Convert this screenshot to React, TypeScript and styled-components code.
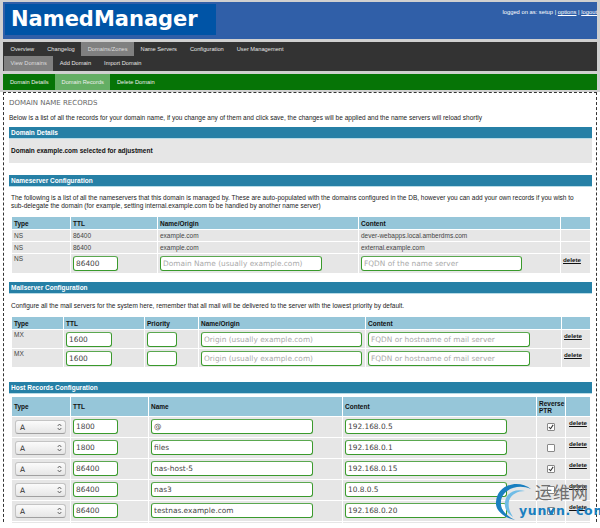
import styled, { createGlobalStyle } from 'styled-components';

const GlobalStyle = createGlobalStyle`
  html, body {
    margin: 0;
    padding: 0;
    height: 528px;
    overflow: hidden;
    background: #fff;
    font-family: "Liberation Sans", Arial, sans-serif;
    font-size: 6.5px;
    color: #222;
  }
`;

const Page = styled.div`
  width: 600px;
  height: 523px;
  overflow: hidden;
  position: relative;
  background: linear-gradient(#d0d0d0 0, #d0d0d0 92px, #fff 92px);
  padding: 2px 3px 0;
  box-sizing: border-box;
`;

const Header = styled.div`
  display: flex;
  justify-content: space-between;
  height: 37px;
  background: #305fa8;
  padding: 2px 0 0 2px;
  box-sizing: border-box;
`;

const Logo = styled.div`
  width: 211px;
  height: 31px;
  background: #0054a6;
  color: #fff;
  font: bold 21px/31px "DejaVu Sans", sans-serif;
  padding-left: 6px;
  box-sizing: border-box;
`;

const Session = styled.div`
  color: #fff;
  font-size: 5.8px;
  padding-top: 5px;

  a {
    color: #fff;
    text-decoration: underline;
  }
`;

const Nav = styled.div`
  margin-top: 3px;
  height: 29px;
  background: #333;
`;

const NavRow = styled.div`
  display: flex;
  height: 14px;
  padding-left: 1px;

  & + & {
    height: 15px;
  }
`;

const NavTab = styled.div<{ $active?: boolean }>`
  padding: 0 6.5px;
  line-height: 14.5px;
  font-size: 5.7px;
  color: ${(p) => (p.$active ? '#ddd' : '#e4e4e4')};
  background: ${(p) => (p.$active ? '#808080' : 'transparent')};
  white-space: nowrap;
`;

const SubNav = styled.div`
  display: flex;
  margin-top: 3px;
  height: 16px;
  padding-left: 0.5px;
  background: #067406;
`;

const SubTab = styled.div<{ $active?: boolean }>`
  padding: 0 6.5px;
  line-height: 16px;
  font-size: 5.7px;
  color: #eee;
  background: ${(p) => (p.$active ? '#64ae64' : 'transparent')};
  white-space: nowrap;
`;

const Content = styled.div`
  margin-top: 2px;
  height: 440px;
  border: 1px dashed #333;
  border-bottom: none;
  background: #fff;
  padding: 5px 4px 0 5px;
  box-sizing: border-box;
`;

const Title = styled.h3`
  margin: 0;
  font: normal 7px/10px "DejaVu Sans", sans-serif;
  color: #666;
  text-transform: uppercase;
`;

const Intro = styled.p`
  margin: 5px 0 0;
  line-height: 9px;
  color: #222;
`;

const SectionBar = styled.div<{ $top: number }>`
  margin-top: ${(p) => p.$top}px;
  height: 11px;
  background: #2680a6;
  border-bottom: 1px solid #b8dbe6;
  color: #fff;
  font-weight: bold;
  line-height: 11px;
  padding-left: 2px;
`;

const DetailBox = styled.div`
  height: 24px;
  background: #e6e6e6;
  color: #111;
  font-weight: bold;
  line-height: 24px;
  padding-left: 2px;
`;

const Note = styled.p<{ $height: number; $top: number }>`
  margin: 0;
  height: ${(p) => p.$height}px;
  padding: ${(p) => p.$top}px 15px 0 2px;
  box-sizing: border-box;
  line-height: 8px;
  color: #222;
`;

const Table = styled.table<{ $top?: number }>`
  border-collapse: separate;
  border-spacing: 1px;
  table-layout: fixed;
  width: 580px;
  margin: ${(p) => p.$top ?? 0}px 0 0 2px;
`;

const Col = styled.col<{ $w: number }>`
  width: ${(p) => p.$w}px;
`;

const Th = styled.th<{ $height: number }>`
  height: ${(p) => p.$height}px;
  background: #96c6d9;
  color: #111;
  text-align: left;
  font-weight: bold;
  padding: 0 1px 0 2px;
  line-height: 7px;
`;

const Td = styled.td<{ $height: number; $inset?: number }>`
  height: ${(p) => p.$height}px;
  background: #e6e6e6;
  color: #444;
  padding: 1px 2px 1px ${(p) => p.$inset ?? 2}px;
  vertical-align: ${(p) => (p.$height > 14 ? 'top' : 'middle')};
  box-sizing: border-box;
  line-height: 8px;
  overflow: hidden;
`;

const CheckCell = styled(Td)`
  text-align: center;
  vertical-align: middle;
`;

const Field = styled.input<{ $w: number }>`
  display: block;
  width: ${(p) => p.$w}px;
  height: 15px;
  box-sizing: border-box;
  margin-top: 1px;
  padding: 0 2px;
  border: 1px solid #3a9a2c;
  border-top-color: #5aa84f;
  border-radius: 3px;
  outline: none;
  background: #fff;
  color: #444;
  font: 7.4px "DejaVu Sans", sans-serif;

  &::placeholder {
    color: #aaa;
    opacity: 1;
  }
`;

const SelectBox = styled.div`
  display: flex;
  align-items: center;
  justify-content: space-between;
  width: 51px;
  height: 14px;
  margin: 2px 0 0 1px;
  padding: 0 3px 0 4px;
  box-sizing: border-box;
  border: 1px solid #c4c4c4;
  border-bottom-color: #a0a0a0;
  border-radius: 3px;
  background: linear-gradient(#fbfbfb, #e6e6e6);
  color: #333;
  font: 7.4px "DejaVu Sans", sans-serif;
`;

const Check = styled.span`
  display: inline-flex;
  width: 8px;
  height: 8px;
  box-sizing: border-box;
  border: 1px solid #888;
  border-radius: 1px;
  background: #fff;
  vertical-align: middle;
`;

const Delete = styled.a`
  color: #111;
  font-size: 6.2px;
  font-weight: bold;
  text-decoration: underline;
  line-height: 9px;
`;

const Watermark = styled.div`
  position: absolute;
  left: 490px;
  top: 480px;
  width: 110px;
  height: 43px;
`;

const WatermarkCn = styled.div`
  position: absolute;
  left: 45px;
  top: 2px;
  color: #6f6f6f;
  font: 17px/20px "Noto Sans CJK SC", sans-serif;
  letter-spacing: 1px;
  white-space: nowrap;
`;

const WatermarkEn = styled.div`
  position: absolute;
  left: 29px;
  top: 24px;
  color: #1a7fc0;
  font: bold 12.5px/14px "DejaVu Sans", sans-serif;
  letter-spacing: 0.7px;
  white-space: nowrap;
`;

const Swirl = styled.svg`
  position: absolute;
  left: 5px;
  top: 2px;
`;

const nameservers = [
  ['NS', '86400', 'example.com', 'dever-webapps.local.amberdms.com'],
  ['NS', '86400', 'example.com', 'external.example.com'],
];

const hosts = [
  ['1800', '@', '192.168.0.5', true],
  ['1800', 'files', '192.168.0.1', false],
  ['86400', 'nas-host-5', '192.168.0.15', true],
  ['86400', 'nas3', '10.8.0.5', false],
  ['86400', 'testnas.example.com', '192.168.0.20', true],
] as const;

const Tick = () => (
  <svg width="6" height="6" viewBox="0 0 7 7">
    <path d="M1 3.5 L3 5.5 L6 1" fill="none" stroke="#333" strokeWidth="1.2" />
  </svg>
);

const Arrows = () => (
  <svg width="5" height="8" viewBox="0 0 5 8">
    <path d="M.7 3 2.5 1 4.3 3M.7 5 2.5 7 4.3 5" fill="none" stroke="#444" strokeWidth=".8" />
  </svg>
);

const App = () => (
  <>
    <GlobalStyle />
    <Page>
      <Header>
        <Logo>NamedManager</Logo>
        <Session>
          logged on as: setup | <a>options</a> | <a>logout</a>
        </Session>
      </Header>
      <Nav>
        <NavRow>
          <NavTab>Overview</NavTab>
          <NavTab>Changelog</NavTab>
          <NavTab $active>Domains/Zones</NavTab>
          <NavTab>Name Servers</NavTab>
          <NavTab>Configuration</NavTab>
          <NavTab>User Management</NavTab>
        </NavRow>
        <NavRow>
          <NavTab $active>View Domains</NavTab>
          <NavTab>Add Domain</NavTab>
          <NavTab>Import Domain</NavTab>
        </NavRow>
      </Nav>
      <SubNav>
        <SubTab>Domain Details</SubTab>
        <SubTab $active>Domain Records</SubTab>
        <SubTab>Delete Domain</SubTab>
      </SubNav>
      <Content>
        <Title>Domain Name Records</Title>
        <Intro>
          Below is a list of all the records for your domain name, if you change any of them and
          click save, the changes will be applied and the name servers will reload shortly
        </Intro>
        <SectionBar $top={5}>Domain Details</SectionBar>
        <DetailBox>Domain example.com selected for adjustment</DetailBox>
        <SectionBar $top={12}>Nameserver Configuration</SectionBar>
        <Note $height={29} $top={7}>
          The following is a list of all the nameservers that this domain is managed by. These are
          auto-populated with the domains configured in the DB, however you can add your own records
          if you wish to sub-delegate the domain (for example, setting internal.example.com to be
          handled by another name server)
        </Note>
        <Table>
          <colgroup>
            <Col $w={58} />
            <Col $w={86} />
            <Col $w={200} />
            <Col $w={201} />
            <Col $w={29} />
          </colgroup>
          <tbody>
            <tr>
              <Th $height={12}>Type</Th>
              <Th $height={12}>TTL</Th>
              <Th $height={12}>Name/Origin</Th>
              <Th $height={12}>Content</Th>
              <Th $height={12} />
            </tr>
            {nameservers.map((row) => (
              <tr key={row[3]}>
                {row.map((cell) => (
                  <Td $height={11} key={cell}>
                    {cell}
                  </Td>
                ))}
                <Td $height={11} />
              </tr>
            ))}
            <tr>
              <Td $height={19}>NS</Td>
              <Td $height={19}>
                <Field $w={45} defaultValue="86400" />
              </Td>
              <Td $height={19}>
                <Field $w={162} placeholder="Domain Name (usually example.com)" />
              </Td>
              <Td $height={19}>
                <Field $w={161} placeholder="FQDN of the name server" />
              </Td>
              <Td $height={19}>
                <Delete>delete</Delete>
              </Td>
            </tr>
          </tbody>
        </Table>
        <SectionBar $top={8}>Mailserver Configuration</SectionBar>
        <Note $height={22} $top={8}>
          Configure all the mail servers for the system here, remember that all mail will be
          delivered to the server with the lowest priority by default.
        </Note>
        <Table>
          <colgroup>
            <Col $w={51} />
            <Col $w={80} />
            <Col $w={53} />
            <Col $w={166} />
            <Col $w={195} />
            <Col $w={28} />
          </colgroup>
          <tbody>
            <tr>
              <Th $height={12}>Type</Th>
              <Th $height={12}>TTL</Th>
              <Th $height={12}>Priority</Th>
              <Th $height={12}>Name/Origin</Th>
              <Th $height={12}>Content</Th>
              <Th $height={12} />
            </tr>
            {[0, 1].map((i) => (
              <tr key={i}>
                <Td $height={18}>MX</Td>
                <Td $height={18}>
                  <Field $w={46} defaultValue="1600" />
                </Td>
                <Td $height={18}>
                  <Field $w={30} />
                </Td>
                <Td $height={18}>
                  <Field $w={161} placeholder="Origin (usually example.com)" />
                </Td>
                <Td $height={18}>
                  <Field $w={162} placeholder="FQDN or hostname of mail server" />
                </Td>
                <Td $height={18}>
                  <Delete>delete</Delete>
                </Td>
              </tr>
            ))}
          </tbody>
        </Table>
        <SectionBar $top={14}>Host Records Configuration</SectionBar>
        <Table $top={2}>
          <colgroup>
            <Col $w={58} />
            <Col $w={77} />
            <Col $w={193} />
            <Col $w={193} />
            <Col $w={28} />
            <Col $w={24} />
          </colgroup>
          <tbody>
            <tr>
              <Th $height={19}>Type</Th>
              <Th $height={19}>TTL</Th>
              <Th $height={19}>Name</Th>
              <Th $height={19}>Content</Th>
              <Th $height={19}>Reverse PTR</Th>
              <Th $height={19} />
            </tr>
            {hosts.map(([ttl, name, content, ptr]) => (
              <tr key={name}>
                <Td $height={20}>
                  <SelectBox>
                    A
                    <Arrows />
                  </SelectBox>
                </Td>
                <Td $height={20}>
                  <Field $w={45} defaultValue={ttl} />
                </Td>
                <Td $height={20}>
                  <Field $w={162} defaultValue={name} />
                </Td>
                <Td $height={20}>
                  <Field $w={162} defaultValue={content} />
                </Td>
                <CheckCell $height={20}>
                  <Check>{ptr && <Tick />}</Check>
                </CheckCell>
                <Td $height={20} $inset={3}>
                  <Delete>delete</Delete>
                </Td>
              </tr>
            ))}
            <tr>
              <Td $height={20} />
              <Td $height={20} />
              <Td $height={20} />
              <Td $height={20} />
              <Td $height={20} />
              <Td $height={20} />
            </tr>
          </tbody>
        </Table>
      </Content>
      <Watermark>
        <Swirl width="40" height="38" viewBox="0 0 40 38">
          <path d="M36 7C24-3 2 2 1 20c-1 9 9 16 19 18C10 33 5 27 6 19 7 8 22 1 36 7Z" fill="#1a7fc0" />
          <path d="M30 9C20 6 11 11 10 20c-1 7 3 12 8 15-4-6-5-11-4-16 2-7 9-10 16-10Z" fill="#6fbce6" />
        </Swirl>
        <WatermarkCn>运维网</WatermarkCn>
        <WatermarkEn>yunvn. com</WatermarkEn>
      </Watermark>
    </Page>
  </>
);

export default App;
